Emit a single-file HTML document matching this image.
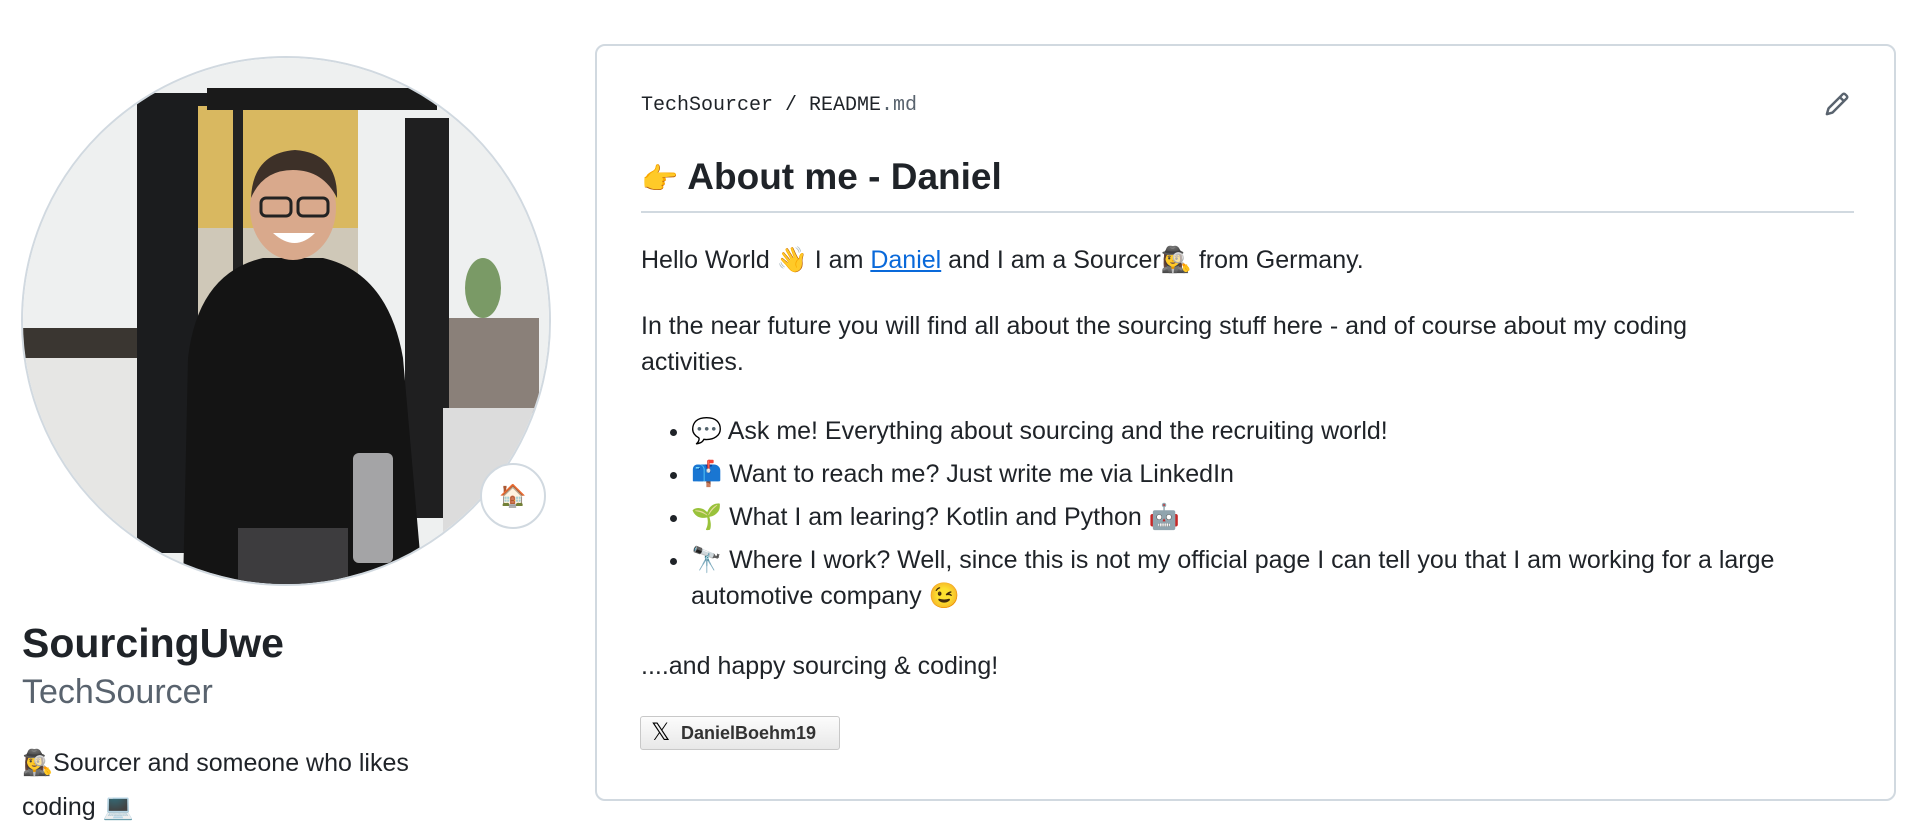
<!DOCTYPE html>
<html><head><meta charset="utf-8">
<style>
*{box-sizing:border-box;margin:0;padding:0}
body{width:1920px;height:834px;background:#fff;font-family:"Liberation Sans","Noto Sans CJK JP",sans-serif;color:#1f2328;position:relative;overflow:hidden}
.av{position:absolute;left:21px;top:56px;width:530px;height:530px;border-radius:50%;overflow:hidden;border:2px solid #d1d9e0}
.badge{position:absolute;left:480px;top:463px;width:66px;height:66px;border-radius:50%;background:#fff;border:2px solid #d1d9e0;text-align:center;line-height:62px;font-size:22px}
.name{position:absolute;left:22px;top:619px;font-size:41px;font-weight:bold;line-height:48px}
.login{position:absolute;left:22px;top:671px;font-size:34px;color:#59636e;line-height:42px}
.bio{position:absolute;left:22px;top:741px;font-size:25px;line-height:44px;width:500px}
.card{position:absolute;left:595px;top:44px;width:1301px;height:757px;border:2px solid #d1d9e0;border-radius:10px}
.crumb{position:absolute;left:44px;top:48px;font-family:"Liberation Mono",monospace;font-size:20px;color:#1f2328}
.crumb .md{color:#59636e}
.pen{position:absolute;right:44px;top:45px}
h2{position:absolute;left:44px;top:106px;width:1213px;font-size:37px;font-weight:bold;line-height:50px;padding-bottom:6px;border-bottom:2px solid #d1d9e0}
h2 .e{font-size:30px}
.t{position:absolute;left:44px;font-size:25px;line-height:36px;width:1213px}
a{color:#0969da;text-decoration:underline}
ul{position:absolute;left:44px;top:367px;font-size:25px;line-height:36px;width:1213px;padding-left:50px}
li{margin-bottom:7px}
.xb{position:absolute;left:43px;top:670px;width:200px;height:34px;border:1px solid #c8c8c8;border-radius:3px;background:linear-gradient(#fcfcfc,#e8e8e8);font-size:18px;font-weight:bold;line-height:32px;padding-left:40px;color:#333}
.xb span{position:absolute;left:10px;top:0;font-size:24px;font-weight:normal;color:#000}
</style></head><body>
<div class="av">
<svg width="530" height="530" viewBox="0 0 530 530">
<rect width="530" height="530" fill="#eef0f0"/>
<rect x="0" y="270" width="140" height="260" fill="#e6e6e4"/>
<rect x="0" y="270" width="140" height="30" fill="#3a3631"/>
<rect x="114" y="35" width="70" height="460" fill="#1b1c1e"/>
<rect x="175" y="48" width="160" height="215" fill="#d9b860"/>
<rect x="175" y="170" width="160" height="320" fill="#cfc8b8"/>
<rect x="210" y="48" width="10" height="420" fill="#222"/>
<rect x="184" y="30" width="230" height="22" fill="#1a1a1a"/>
<rect x="382" y="60" width="44" height="400" fill="#1f1f20"/>
<rect x="426" y="260" width="90" height="95" fill="#8a8079"/>
<rect x="420" y="350" width="110" height="180" fill="#dcdcdc"/>
<ellipse cx="460" cy="230" rx="18" ry="30" fill="#7a9a66"/>
<path d="M160 530 L165 300 Q175 215 240 200 L300 200 Q365 215 380 300 L400 530 Z" fill="#141414"/>
<rect x="215" y="470" width="110" height="60" fill="#3d3c3e"/>
<rect x="330" y="395" width="40" height="110" rx="6" fill="#a4a4a6"/>
<ellipse cx="270" cy="150" rx="43" ry="52" fill="#d9a98c"/>
<path d="M228 140 Q230 95 272 92 Q315 95 314 140 Q300 112 270 112 Q240 112 228 140Z" fill="#3d3028"/>
<rect x="238" y="140" width="30" height="18" rx="5" fill="none" stroke="#222" stroke-width="3"/>
<rect x="275" y="140" width="30" height="18" rx="5" fill="none" stroke="#222" stroke-width="3"/>
<path d="M250 175 Q272 195 292 175 Z" fill="#fff"/>
</svg>
</div>
<div class="badge">🏠</div>
<div class="name">SourcingUwe</div>
<div class="login">TechSourcer</div>
<div class="bio">🕵️‍♀️Sourcer and someone who likes<br>coding 💻</div>

<div class="card">
<div class="crumb">TechSourcer / README<span class="md">.md</span></div>
<svg class="pen" width="26" height="26" viewBox="0 0 16 16"><path fill="#59636e" d="M11.013 1.427a1.750 1.75 0 0 1 2.474 0l1.086 1.086a1.75 1.75 0 0 1 0 2.474l-8.61 8.61c-.21.21-.47.364-.756.445l-3.251.93a.75.75 0 0 1-.927-.928l.929-3.250c.081-.286.235-.547.445-.758l8.61-8.61Zm.176 4.823L9.75 4.81l-6.286 6.287a.253.253 0 0 0-.064.108l-.558 1.953 1.953-.558a.253.253 0 0 0 .108-.064Zm1.238-3.763a.25.25 0 0 0-.354 0L10.811 3.75l1.439 1.44 1.263-1.263a.25.25 0 0 0 0-.354Z"/></svg>
<h2><span class="e">👉</span> About me - Daniel</h2>
<div class="t" style="top:196px">Hello World 👋 I am <a>Daniel</a> and I am a Sourcer🕵️‍♀️ from Germany.</div>
<div class="t" style="top:262px">In the near future you will find all about the sourcing stuff here - and of course about my coding<br>activities.</div>
<ul>
<li>💬 Ask me! Everything about sourcing and the recruiting world!</li>
<li>📫 Want to reach me? Just write me via LinkedIn</li>
<li>🌱 What I am learing? Kotlin and Python 🤖</li>
<li>🔭 Where I work? Well, since this is not my official page I can tell you that I am working for a large<br>automotive company 😉</li>
</ul>
<div class="t" style="top:602px">....and happy sourcing &amp; coding!</div>
<div class="xb"><span>𝕏</span>DanielBoehm19</div>
</div>
</body></html>
